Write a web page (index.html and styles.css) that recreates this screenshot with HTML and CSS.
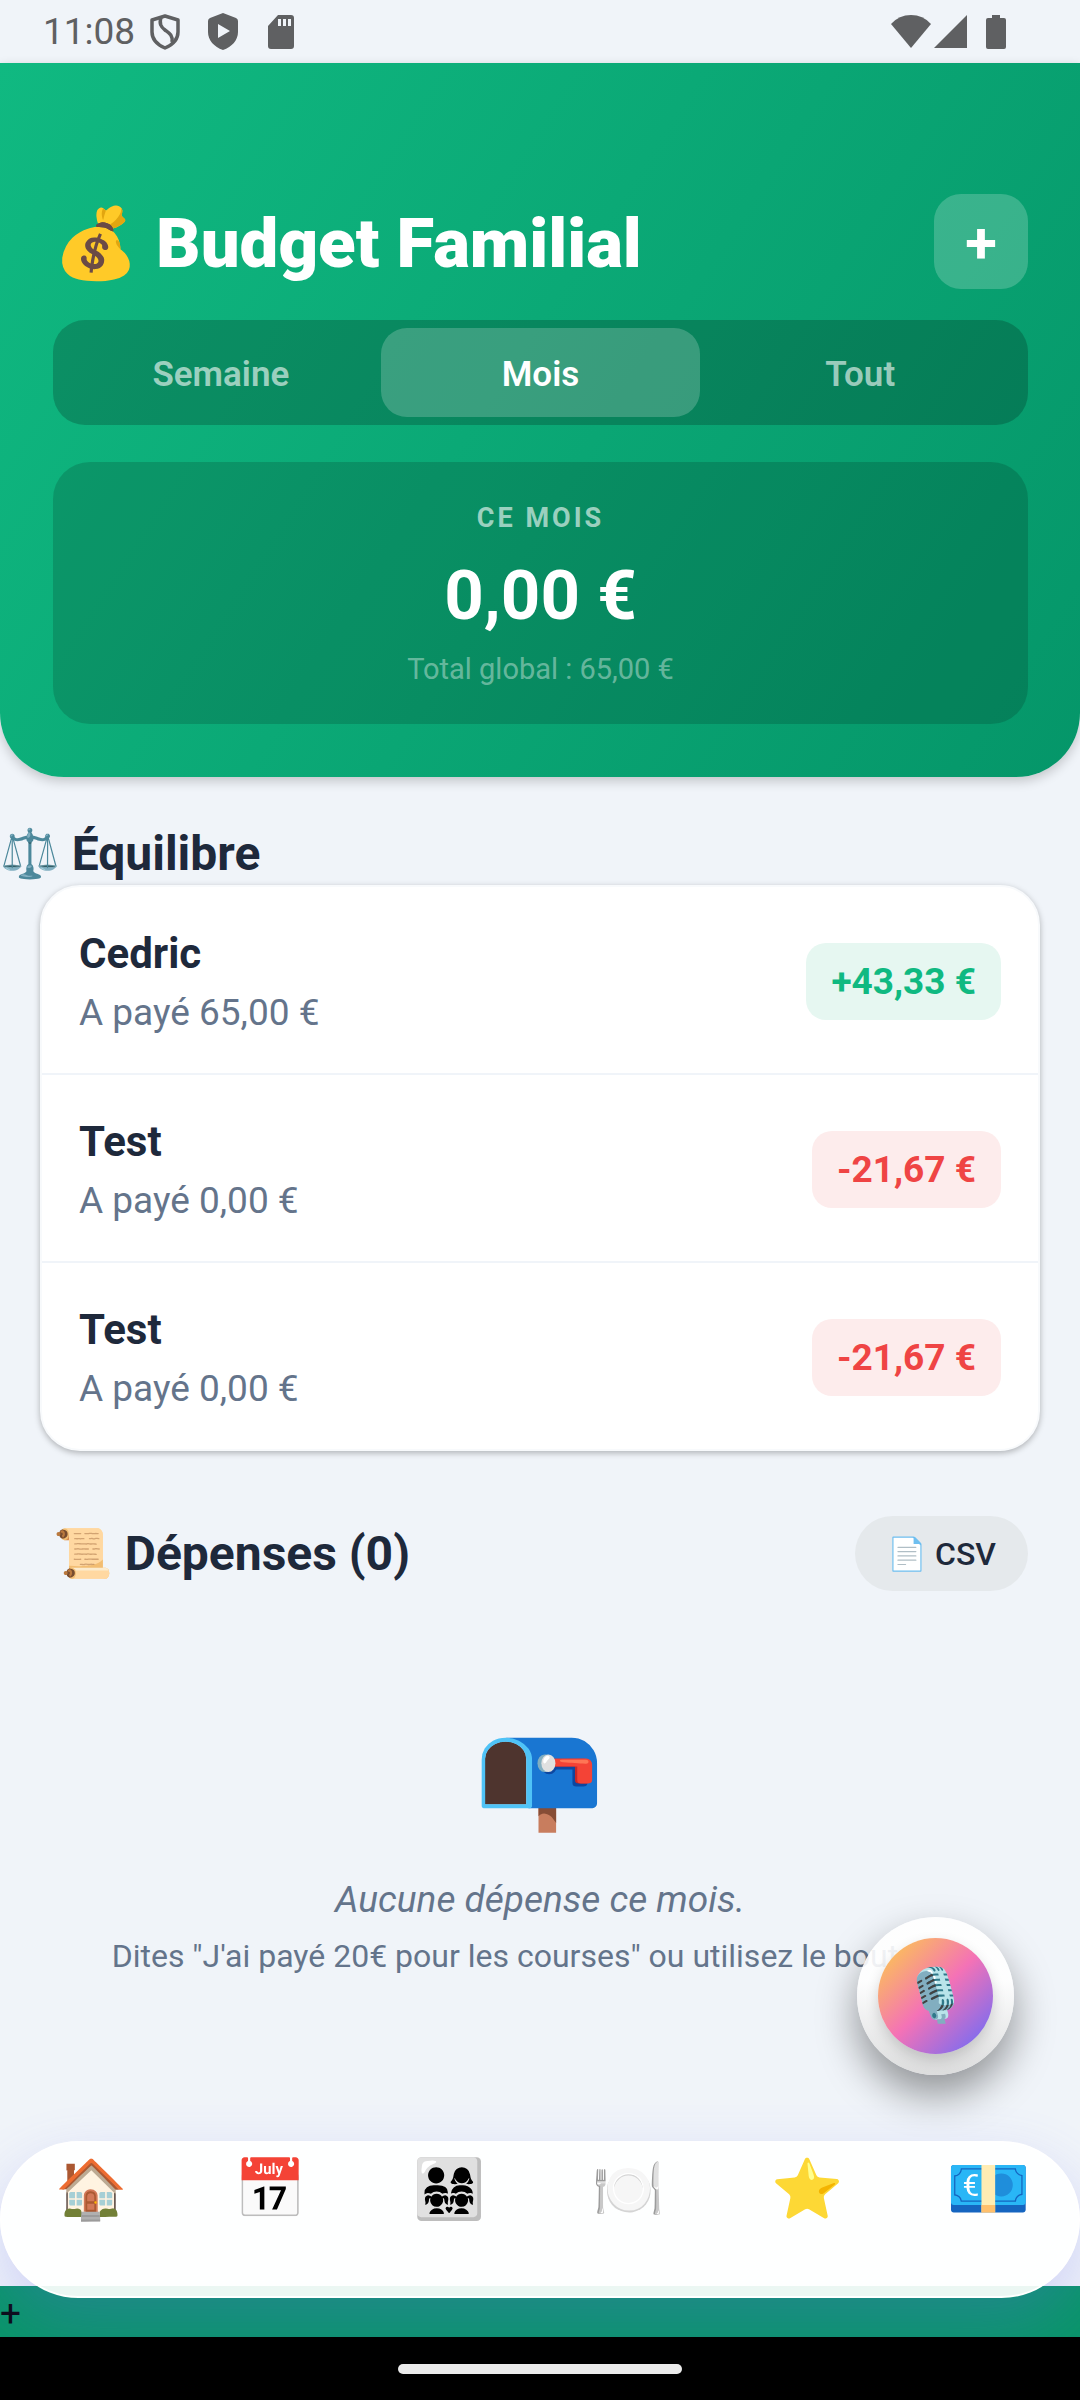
FILE: index.html
```html
<!DOCTYPE html>
<html lang="fr">
<head>
	<meta charset="UTF-8">
	<meta name="viewport" content="width=device-width, initial-scale=1">
	<title>Budget Familial</title>
	<link rel="stylesheet" href="styles.css">
</head>
<body>

<div class="status">
	<span class="status__time">11:08</span>
	<svg class="status__icon status__icon_shield" width="30" height="36" viewBox="0 0 30 36">
		<path d="M15 2L28 6v12c0 8-6 13-13 16C8 31 2 26 2 18V6z" fill="none" stroke="#5f6062" stroke-width="3.5" stroke-linejoin="round"/>
		<path d="M11 3c-2 7 0 10 4 13s8 5 7 12" fill="none" stroke="#5f6062" stroke-width="3.5"/>
	</svg>
	<svg class="status__icon status__icon_play" width="30" height="37" viewBox="0 0 30 37">
		<path fill-rule="evenodd" d="M15 0l13 5q2 1 2 3v11c0 8-6 15-15 18C6 34 0 27 0 19V8q0-2 2-3zM10 11v14l12-7z" fill="#5f6062"/>
	</svg>
	<svg class="status__icon status__icon_card" width="26" height="34" viewBox="0 0 26 34">
		<path fill-rule="evenodd" d="M10 0h13q3 0 3 3v28q0 3-3 3H3q-3 0-3-3V11zM10 4v7h3V4zM15 4v7h3V4zM20 4v7h3V4z" fill="#5f6062"/>
	</svg>
	<svg class="status__icon status__icon_wifi" width="40" height="33" viewBox="0 0 40 33">
		<path d="M20 33L0 9Q8 0 20 0t20 9z" fill="#5f6062"/>
	</svg>
	<svg class="status__icon status__icon_signal" width="33" height="33" viewBox="0 0 33 33">
		<path d="M33 0v33H0z" fill="#5f6062"/>
	</svg>
	<svg class="status__icon status__icon_battery" width="20" height="34" viewBox="0 0 20 34">
		<path d="M6 0h8v3h4q2 0 2 2v27q0 2-2 2H2q-2 0-2-2V5q0-2 2-2h4z" fill="#5f6062"/>
	</svg>
</div>

<header class="header">
	<div class="header__top">
		<h1 class="header__title">💰 Budget Familial</h1>
		<button class="header__add" type="button" aria-label="Ajouter">+</button>
	</div>
	<div class="tabs">
		<button class="tabs__tab" type="button">Semaine</button>
		<button class="tabs__tab tabs__tab_active" type="button">Mois</button>
		<button class="tabs__tab" type="button">Tout</button>
	</div>
	<div class="total">
		<span class="total__label">CE MOIS</span>
		<span class="total__amount">0,00 €</span>
		<span class="total__global">Total global : 65,00 €</span>
	</div>
</header>

<main class="content">
	<h2 class="title">⚖️ Équilibre</h2>
	<ul class="balance">
		<li class="member">
			<div class="member__info">
				<span class="member__name">Cedric</span>
				<span class="member__paid">A payé 65,00 €</span>
			</div>
			<span class="member__balance member__balance_plus">+43,33 €</span>
		</li>
		<li class="member">
			<div class="member__info">
				<span class="member__name">Test</span>
				<span class="member__paid">A payé 0,00 €</span>
			</div>
			<span class="member__balance member__balance_minus">-21,67 €</span>
		</li>
		<li class="member">
			<div class="member__info">
				<span class="member__name">Test</span>
				<span class="member__paid">A payé 0,00 €</span>
			</div>
			<span class="member__balance member__balance_minus">-21,67 €</span>
		</li>
	</ul>

	<div class="expenses">
		<h2 class="title">📜 Dépenses (0)</h2>
		<button class="expenses__csv" type="button">📄 CSV</button>
	</div>

	<div class="empty">
		<span class="empty__icon">📭</span>
		<p class="empty__text">Aucune dépense ce mois.</p>
		<p class="empty__hint">Dites "J'ai payé 20€ pour les courses" ou utilisez le bouton +.</p>
	</div>
</main>

<div class="strip">+</div>
<div class="gesture"><span class="gesture__bar"></span></div>

<nav class="nav">
	<a class="nav__link" href="#">🏠</a>
	<a class="nav__link" href="#">📅</a>
	<a class="nav__link" href="#">👨‍👩‍👧‍👧</a>
	<a class="nav__link" href="#">🍽️</a>
	<a class="nav__link" href="#">⭐</a>
	<a class="nav__link nav__link_active" href="#">💶</a>
</nav>

<button class="mic" type="button" aria-label="Parler"><span class="mic__circle">🎙️</span></button>

</body>
</html>
```

FILE: styles.css
```css
* {
	box-sizing: border-box;
}

body {
	position: relative;
	display: flex;
	flex-direction: column;
	min-height: 100vh;
	margin: 0;
	background: #f0f4f9;
	color: #1e293b;
	font-family: Roboto, "Noto Color Emoji", sans-serif;
}

button {
	border: none;
	font-family: inherit;
	cursor: pointer;
}

h1, h2, p, ul {
	margin: 0;
	padding: 0;
}

/* status bar */
.status {
	display: flex;
	align-items: center;
	height: 63px;
	padding: 0 74px 0 43px;
	color: #5f6062;
}

.status__time {
	font-size: 37px;
	line-height: 44px;
}

.status__icon_shield {
	margin-left: 15px;
}

.status__icon_play {
	margin-left: 28px;
}

.status__icon_card {
	margin-left: 30px;
}

.status__icon_wifi {
	margin-left: auto;
}

.status__icon_signal {
	margin-left: 3px;
}

.status__icon_battery {
	margin-left: 19px;
}

/* header */
.header {
	padding: 131px 52px 53px 53px;
	border-radius: 0 0 64px 64px;
	background: linear-gradient(123deg, #10b981, #059669);
	box-shadow: 0 4px 12px rgba(0, 0, 0, 0.2);
	color: #fff;
}

.header__top {
	display: flex;
	justify-content: space-between;
	align-items: center;
	margin-bottom: 31px;
}

.header__title {
	padding-top: 5px;
	font-size: 69px;
	font-weight: 900;
	line-height: 80px;
}

.header__add {
	width: 94px;
	height: 95px;
	padding-top: 4px;
	border-radius: 27px;
	background: rgba(255, 255, 255, 0.2);
	color: #fff;
	font-size: 58px;
	font-weight: 700;
	line-height: 64px;
}

.tabs {
	display: flex;
	margin-bottom: 37px;
	padding: 8px;
	border-radius: 32px;
	background: rgba(0, 0, 0, 0.2);
}

.tabs__tab {
	flex: 1;
	height: 89px;
	padding: 3px 0 0;
	border-radius: 26px;
	background: none;
	color: rgba(255, 255, 255, 0.6);
	font-size: 35px;
	font-weight: 600;
}

.tabs__tab_active {
	background: rgba(255, 255, 255, 0.2);
	color: #fff;
}

.total {
	display: flex;
	flex-direction: column;
	align-items: center;
	padding: 40px 38px 38px;
	border-radius: 37px;
	background: rgba(0, 0, 0, 0.15);
}

.total__label {
	color: rgba(255, 255, 255, 0.6);
	font-size: 27px;
	font-weight: 700;
	line-height: 32px;
	letter-spacing: 3px;
}

.total__amount {
	margin: 22px 0 16px;
	font-size: 69px;
	font-weight: 700;
	line-height: 80px;
}

.total__global {
	color: rgba(255, 255, 255, 0.4);
	font-size: 29px;
	line-height: 34px;
}

/* content */
.content {
	flex: 1;
	padding-top: 49px;
}

.title {
	font-size: 48px;
	font-weight: 700;
	line-height: 56px;
}

.balance {
	margin: 3px 40px 65px;
	border: 2px solid #f8fafc;
	border-radius: 40px;
	background: #fff;
	box-shadow: 0 2px 6px rgba(0, 0, 0, 0.28);
	list-style: none;
}

.member {
	display: flex;
	justify-content: space-between;
	align-items: center;
	padding: 40px 37px 37px;
}

.member:not(:last-child) {
	border-bottom: 2px solid #f0f4f9;
}

.member__info {
	display: flex;
	flex-direction: column;
	gap: 9px;
}

.member__name {
	font-size: 42px;
	font-weight: 700;
	line-height: 54px;
}

.member__paid {
	color: #64748b;
	font-size: 37px;
	line-height: 46px;
}

.member__balance {
	padding: 17px 25px 16px;
	border-radius: 20px;
	font-size: 37px;
	font-weight: 700;
	line-height: 44px;
}

.member__balance_plus {
	background: #e6f7f1;
	color: #10b981;
}

.member__balance_minus {
	background: #fdecec;
	color: #ef4444;
}

.expenses {
	display: flex;
	justify-content: space-between;
	align-items: center;
	padding: 0 52px 0 53px;
}

.expenses__csv {
	height: 75px;
	padding: 0 32px;
	border-radius: 38px;
	background: #e5e9ec;
	color: #1e293b;
	font-size: 32px;
	font-weight: 500;
}

.empty {
	display: flex;
	flex-direction: column;
	align-items: center;
	padding: 123px 53px 0;
	color: #64748b;
}

.empty__icon {
	font-size: 105px;
	line-height: 124px;
}

.empty__text {
	margin: 40px 0 15px;
	font-size: 37px;
	font-style: italic;
	line-height: 44px;
}

.empty__hint {
	font-size: 32px;
	line-height: 38px;
}

/* bottom */
.strip {
	height: 51px;
	background: #0a956a;
	color: #0a0a14;
	font-size: 37px;
	line-height: 56px;
}

.gesture {
	display: flex;
	justify-content: center;
	align-items: center;
	height: 63px;
	background: #000;
}

.gesture__bar {
	width: 284px;
	height: 10px;
	border-radius: 5px;
	background: #ebebeb;
}

/* the bar floats over the list and the strip */
.nav {
	position: absolute;
	right: 0;
	bottom: 102px;
	left: 0;
	display: flex;
	height: 157px;
	border: 2px solid #fff;
	border-radius: 79px;
	background: rgba(255, 255, 255, 0.92);
	box-shadow: 0 24px 60px rgba(99, 102, 241, 0.24);
	clip-path: inset(-80px 0 -39px 0);
}

.nav__link {
	flex: 1;
	padding: 12px 0 0 1px;
	font-size: 58px;
	line-height: 68px;
	text-align: center;
	text-decoration: none;
}

.nav__link_active {
	padding-left: 4px;
	font-size: 68px;
}

.mic {
	position: absolute;
	right: 66px;
	bottom: 325px;
	display: flex;
	justify-content: center;
	align-items: center;
	width: 157px;
	height: 158px;
	padding: 0;
	border-radius: 50%;
	background: linear-gradient(rgba(255, 255, 255, 0.9) 40%, rgba(218, 218, 218, 0.9));
	box-shadow: 0 20px 40px rgba(0, 0, 0, 0.4);
}

.mic__circle {
	width: 115px;
	height: 116px;
	border-radius: 50%;
	background: linear-gradient(135deg, #fbbf5a 10%, #f472b6 50%, #7c6cf0 90%);
	box-shadow: 0 6px 14px rgba(0, 0, 0, 0.16);
	font-size: 52px;
	line-height: 116px;
	text-align: center;
}
```
